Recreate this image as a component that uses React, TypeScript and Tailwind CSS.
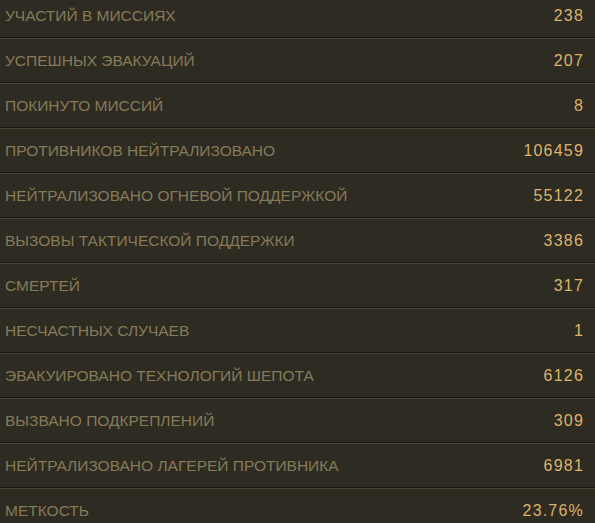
const stats: [string, string][] = [
  ['УЧАСТИЙ В МИССИЯХ', '238'],
  ['УСПЕШНЫХ ЭВАКУАЦИЙ', '207'],
  ['ПОКИНУТО МИССИЙ', '8'],
  ['ПРОТИВНИКОВ НЕЙТРАЛИЗОВАНО', '106459'],
  ['НЕЙТРАЛИЗОВАНО ОГНЕВОЙ ПОДДЕРЖКОЙ', '55122'],
  ['ВЫЗОВЫ ТАКТИЧЕСКОЙ ПОДДЕРЖКИ', '3386'],
  ['СМЕРТЕЙ', '317'],
  ['НЕСЧАСТНЫХ СЛУЧАЕВ', '1'],
  ['ЭВАКУИРОВАНО ТЕХНОЛОГИЙ ШЕПОТА', '6126'],
  ['ВЫЗВАНО ПОДКРЕПЛЕНИЙ', '309'],
  ['НЕЙТРАЛИЗОВАНО ЛАГЕРЕЙ ПРОТИВНИКА', '6981'],
  ['МЕТКОСТЬ', '23.76%'],
]

export default function App() {
  return (
    <div className="h-[523px] w-[595px] overflow-hidden bg-[#2e2b22] font-['Liberation_Sans',Arial,sans-serif]">
      <div className="mt-[-6px]">
        {stats.map(([label, value]) => (
          <div key={label} className="border-b border-[#4a4432]">
            <div className="flex h-[44px] items-center justify-between border-b border-[#1b1912] pl-[5px] pr-[11px]">
              <span className="text-[15.5px] text-[#867a59]">{label}</span>
              <span className="text-[16px] tracking-[1.2px] text-[#dcb46a]">{value}</span>
            </div>
          </div>
        ))}
      </div>
    </div>
  )
}
